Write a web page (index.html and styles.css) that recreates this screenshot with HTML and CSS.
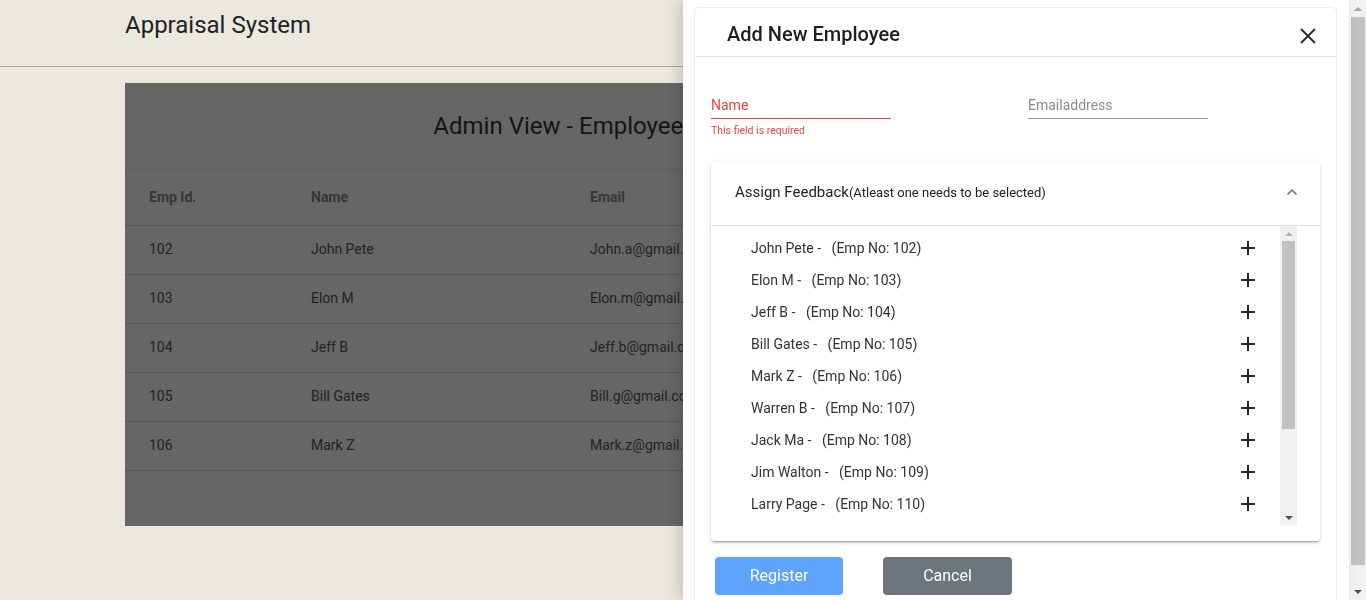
FILE: index.html
```html
<!DOCTYPE html>
<html lang="en">
<head>
<meta charset="utf-8">
<title>Appraisal System</title>
<link rel="stylesheet" href="styles.css">
</head>
<body>
<div class="app">
  <div class="page">
    <header class="topbar">
      <h1 class="brand">Appraisal System</h1>
    </header>
    <main class="content">
      <section class="admin-card">
        <h2 class="admin-title">Admin View - Employee Details</h2>
        <div class="grid-table">
          <div class="trow thead">
            <div>Emp Id.</div><div>Name</div><div>Email</div>
          </div>
          <div class="trow"><div>102</div><div>John Pete</div><div>John.a@gmail.com</div></div>
          <div class="trow"><div>103</div><div>Elon M</div><div>Elon.m@gmail.com</div></div>
          <div class="trow"><div>104</div><div>Jeff B</div><div>Jeff.b@gmail.com</div></div>
          <div class="trow"><div>105</div><div>Bill Gates</div><div>Bill.g@gmail.com</div></div>
          <div class="trow"><div>106</div><div>Mark Z</div><div>Mark.z@gmail.com</div></div>
        </div>
      </section>
    </main>
  </div>
  <div class="page-scroll">
    <div class="sb-arrow"><span class="tri-up"></span></div>
    <div class="sb-thumb page-thumb"></div>
    <div class="sb-rest"></div>
    <div class="sb-arrow"><span class="tri-down"></span></div>
  </div>
</div>

<aside class="drawer">
  <div class="drawer-card">
    <div class="drawer-head">
      <h3 class="drawer-title">Add New Employee</h3>
      <button class="close-btn" aria-label="Close">
        <svg width="24" height="24" viewBox="0 0 24 24"><path d="M5 5L19 19M19 5L5 19" stroke="#2b2b2b" stroke-width="1.8" fill="none"/></svg>
      </button>
    </div>
    <div class="drawer-body">
      <div class="fields">
        <div class="field invalid">
          <div class="field-line"><span class="field-label">Name</span></div>
          <div class="field-error">This field is required</div>
        </div>
        <div class="field">
          <div class="field-line"><span class="field-label">Emailaddress</span></div>
        </div>
      </div>

      <div class="panel">
        <div class="panel-head">
          <span class="panel-title">Assign Feedback<small>(Atleast one needs to be selected)</small></span>
          <svg class="chevron" width="12" height="8" viewBox="0 0 12 8"><polyline points="1.5,6.5 6,2 10.5,6.5" fill="none" stroke="#8a8a8a" stroke-width="1.8"/></svg>
        </div>
        <div class="panel-body">
          <ul class="emp-list">
            <li><span>John Pete - <span class="empno">(Emp No: 102)</span></span><svg class="plus" width="24" height="24" viewBox="0 0 24 24"><path d="M19 13h-6v6h-2v-6H5v-2h6V5h2v6h6v2z" fill="#222"/></svg></li>
            <li><span>Elon M - <span class="empno">(Emp No: 103)</span></span><svg class="plus" width="24" height="24" viewBox="0 0 24 24"><path d="M19 13h-6v6h-2v-6H5v-2h6V5h2v6h6v2z" fill="#222"/></svg></li>
            <li><span>Jeff B - <span class="empno">(Emp No: 104)</span></span><svg class="plus" width="24" height="24" viewBox="0 0 24 24"><path d="M19 13h-6v6h-2v-6H5v-2h6V5h2v6h6v2z" fill="#222"/></svg></li>
            <li><span>Bill Gates - <span class="empno">(Emp No: 105)</span></span><svg class="plus" width="24" height="24" viewBox="0 0 24 24"><path d="M19 13h-6v6h-2v-6H5v-2h6V5h2v6h6v2z" fill="#222"/></svg></li>
            <li><span>Mark Z - <span class="empno">(Emp No: 106)</span></span><svg class="plus" width="24" height="24" viewBox="0 0 24 24"><path d="M19 13h-6v6h-2v-6H5v-2h6V5h2v6h6v2z" fill="#222"/></svg></li>
            <li><span>Warren B - <span class="empno">(Emp No: 107)</span></span><svg class="plus" width="24" height="24" viewBox="0 0 24 24"><path d="M19 13h-6v6h-2v-6H5v-2h6V5h2v6h6v2z" fill="#222"/></svg></li>
            <li><span>Jack Ma - <span class="empno">(Emp No: 108)</span></span><svg class="plus" width="24" height="24" viewBox="0 0 24 24"><path d="M19 13h-6v6h-2v-6H5v-2h6V5h2v6h6v2z" fill="#222"/></svg></li>
            <li><span>Jim Walton - <span class="empno">(Emp No: 109)</span></span><svg class="plus" width="24" height="24" viewBox="0 0 24 24"><path d="M19 13h-6v6h-2v-6H5v-2h6V5h2v6h6v2z" fill="#222"/></svg></li>
            <li><span>Larry Page - <span class="empno">(Emp No: 110)</span></span><svg class="plus" width="24" height="24" viewBox="0 0 24 24"><path d="M19 13h-6v6h-2v-6H5v-2h6V5h2v6h6v2z" fill="#222"/></svg></li>
          </ul>
          <div class="list-scroll">
            <div class="sb-arrow small"><span class="tri-up light"></span></div>
            <div class="sb-thumb list-thumb"></div>
            <div class="sb-rest"></div>
            <div class="sb-arrow small"><span class="tri-down"></span></div>
          </div>
        </div>
      </div>

      <div class="actions">
        <button class="btn btn-primary">Register</button>
        <button class="btn btn-secondary">Cancel</button>
      </div>
    </div>
  </div>
</aside>
</body>
</html>
```
FILE: styles.css
```css
* { box-sizing: border-box; }
html, body { margin: 0; height: 100%; }
body {
  font-family: Roboto, "Liberation Sans", sans-serif;
  background: #ebe8de;
  color: #212121;
  overflow: hidden;
}
.app { display: flex; height: 100vh; }
.page { flex: 1; min-width: 0; }

.topbar {
  height: 67px;
  border-bottom: 1px solid #a6a6a4;
  padding: 11px 0 0 125px;
}
.brand { margin: 0; font-size: 24px; line-height: 28px; font-weight: 400; color: #222; }

.content { padding: 16px 0 0 125px; }
.admin-card { width: 946px; background: #666666; padding-bottom: 55px; }
.admin-title {
  margin: 0; height: 85px; line-height: 86px;
  text-align: center; font-size: 24px; font-weight: 400; color: #141414;
}
.trow {
  display: grid;
  grid-template-columns: 162px 279px 1fr;
  align-items: center;
  height: 49px;
  padding-left: 24px;
  padding-bottom: 2px;
  border-bottom: 1px solid #575757;
  font-size: 14px;
  color: #232323;
}
.thead { height: 58px; padding-bottom: 0; font-weight: 700; color: #363636; border-top: 1px solid #616161; }

/* fake scrollbars */
.page-scroll { width: 17px; background: #f1f1f1; display: flex; flex-direction: column; }
.sb-arrow { height: 17px; display: flex; align-items: center; justify-content: center; }
.sb-arrow.small { height: 15px; }
.sb-thumb { background: #c1c1c1; margin: 0 2px 0 2px; }
.page-thumb { height: 548px; margin: 0 1px 0 2px; }
.sb-rest { flex: 1; }
.tri-up { width: 0; height: 0; border-left: 4px solid transparent; border-right: 4px solid transparent; border-bottom: 4px solid #a3a3a3; }
.tri-up.light { border-bottom-color: #b5b5b5; }
.tri-down { width: 0; height: 0; border-left: 4px solid transparent; border-right: 4px solid transparent; border-top: 4px solid #505050; }

/* drawer overlay */
.drawer {
  position: fixed; top: 0; right: 17px; bottom: 0;
  width: 666px;
  background: #fff;
  box-shadow: -5px 0 12px rgba(0, 0, 0, 0.14);
  padding: 7px 12px 0 11px;
  overflow: hidden;
}
.drawer-card {
  border: 1px solid #ededed;
  border-radius: 4px;
  min-height: 640px;
}
.drawer-head {
  height: 49px;
  border-bottom: 1px solid #e2e2e2;
  display: flex; align-items: center; justify-content: space-between;
  padding: 0 16px 0 32px;
}
.drawer-title { margin: 0; font-size: 20px; font-weight: 500; color: #1e1e1e; padding-top: 4px; }
.close-btn { border: 0; background: none; padding: 0; width: 24px; height: 24px; margin-top: 7px; }
.close-btn svg { display: block; }

.drawer-body { padding: 0 16px; }
.fields { display: flex; align-items: flex-start; gap: 137px; padding-top: 40px; }
.field { width: 180px; }
.field-line { border-bottom: 1px solid #969696; padding-bottom: 5px; }
.field-label { display: block; font-size: 14px; line-height: 16px; color: #8c8c8c; }
.field.invalid .field-line { border-bottom-color: #e04545; }
.field.invalid .field-label { color: #e04545; }
.field-error { margin-top: 6px; font-size: 10.5px; line-height: 12px; color: #e04545; }

.panel {
  margin-top: 25px;
  background: #fff;
  border-radius: 4px;
  box-shadow: 0 3px 1px -2px rgba(0,0,0,.2), 0 2px 2px 0 rgba(0,0,0,.14), 0 1px 5px 0 rgba(0,0,0,.12);
  padding-bottom: 16px;
}
.panel-head {
  height: 64px;
  border-bottom: 1px solid #e0e0e0;
  display: flex; align-items: center; justify-content: space-between;
  padding: 0 22px 4px 24px;
}
.panel-title { font-size: 15px; color: #222; }
.panel-title small { font-size: 13px; }
.chevron { display: block; }

.panel-body { display: flex; height: 299px; padding-right: 23px; }
.emp-list {
  flex: 1; list-style: none; margin: 0;
  padding: 6px 20px 0 40px;
  overflow: hidden;
}
.emp-list li {
  height: 32px;
  display: flex; align-items: center; justify-content: space-between;
  font-size: 14px; color: #333;
}
.empno { margin-left: 7px; }
.plus { display: block; }
.list-scroll { width: 17px; background: #f1f1f1; display: flex; flex-direction: column; }
.list-thumb { height: 188px; }

.actions { display: flex; gap: 40px; padding: 16px 0 0 4px; }
.btn {
  height: 38px; border: 0; border-radius: 4px;
  font-family: Roboto, "Liberation Sans", sans-serif;
  font-size: 16px; color: #fff;
  padding-bottom: 2px;
}
.btn-primary { width: 128px; background: #5ea3fd; }
.btn-secondary { width: 129px; background: #6c757d; }
```
